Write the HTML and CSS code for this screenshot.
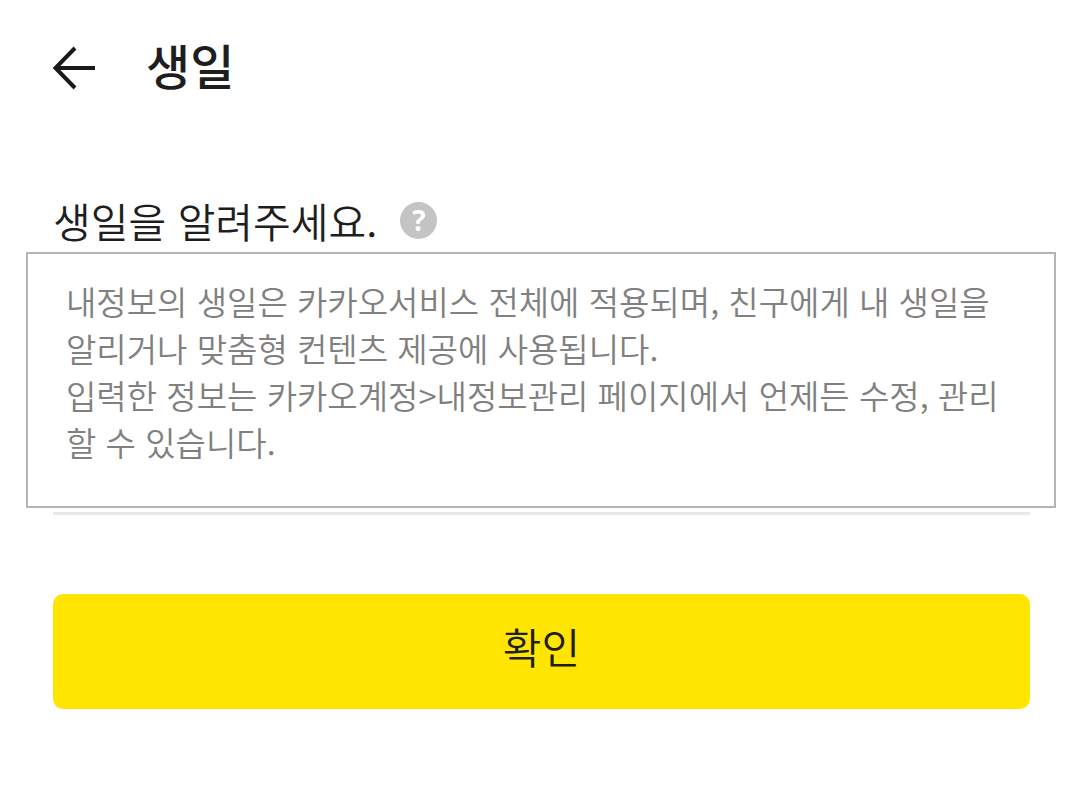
FILE: index.html
```html
<!DOCTYPE html>
<html lang="ko">
<head>
  <meta charset="UTF-8">
  <meta name="viewport" content="width=device-width, initial-scale=1.0">
  <title>생일</title>
  <link rel="stylesheet" href="styles.css">
</head>
<body>
  <header class="header">
    <button type="button" class="back" aria-label="뒤로">
      <svg width="44" height="44" viewBox="0 0 44 44" fill="none" stroke="#1a1a1a" stroke-width="4">
        <path d="M43 22H4M23 2L3.500 22L23 42"/>
      </svg>
    </button>
    <h1>생일</h1>
  </header>

  <main class="content">
    <form class="birthday-form">
      <div class="question">
        <h2>생일을 알려주세요.</h2>
        <button type="button" class="help" aria-label="도움말" aria-describedby="tip">?</button>
        <div id="tip" class="tooltip" role="tooltip">
          <p>내정보의 생일은 카카오서비스 전체에 적용되며, 친구에게 내 생일을 알리거나 맞춤형 컨텐츠 제공에 사용됩니다.</p>
          <p>입력한 정보는 카카오계정&gt;내정보관리 페이지에서 언제든 수정, 관리할 수 있습니다.</p>
        </div>
      </div>
      <div class="field"></div>
      <button type="submit" class="submit">확인</button>
    </form>
  </main>
</body>
</html>
```

FILE: styles.css
```css
* {
  box-sizing: border-box;
}
body {
  margin: 0;
  font-family: "Noto Sans CJK KR", sans-serif;
  background-color: #fff;
  color: #1e1e1e;
}
h1, h2, p {
  margin: 0;
}
button {
  padding: 0;
  border: none;
  font-family: inherit;
  cursor: pointer;
}
.header {
  display: flex;
  align-items: flex-start;
  gap: 50px;
  padding: 28px 52px 0;
}
.back {
  display: flex;
  padding-top: 18px;
  background: none;
}
h1 {
  font-size: 48px;
  font-weight: 500;
  line-height: 72px;
}
.content {
  padding: 90px 50px 0 53px;
}
.question {
  position: relative;
  display: flex;
  align-items: center;
  gap: 23px;
  height: 60px;
}
h2 {
  font-size: 41px;
  font-weight: 350;
  line-height: 60px;
}
.help {
  width: 37px;
  height: 37px;
  border-radius: 50%;
  background-color: #c4c4c4;
  color: #fff;
  font-family: "Open Sans", sans-serif;
  font-size: 28px;
  font-weight: 700;
  line-height: 37px;
}
.tooltip {
  position: absolute;
  top: 62px;
  left: -27px;
  right: -26px;
  padding: 24px 38px 40px;
  border: 2px solid #b4b4b4;
  background-color: #fff;
  color: #808080;
  font-size: 33px;
  font-weight: 350;
  line-height: 47px;
  word-break: break-all;
}
.field {
  height: 265px;
  border-bottom: 3px solid #e8e8e8;
}
.submit {
  width: 100%;
  height: 115px;
  margin-top: 79px;
  padding-bottom: 12px;
  border-radius: 10px;
  background-color: #ffe500;
  color: #1e1e1e;
  font-size: 42px;
  font-weight: 350;
}
```
